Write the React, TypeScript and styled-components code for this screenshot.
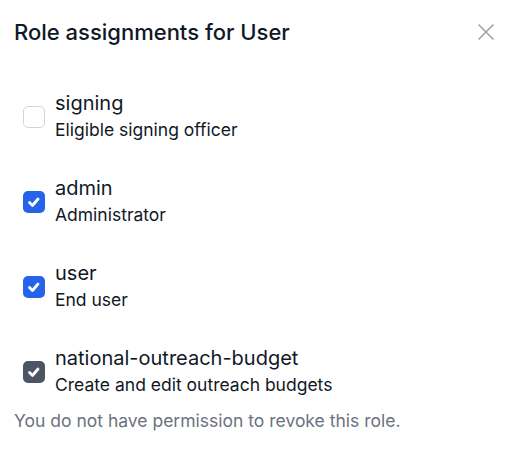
import styled, { createGlobalStyle } from 'styled-components'

const GlobalStyle = createGlobalStyle`
  body {
    margin: 0;
    background: #ffffff;
    font-family: Inter, "Noto Sans", sans-serif;
    color: #111827;
  }
`

const StyledDialog = styled.div`
  width: 512px;
  height: 459px;
  box-sizing: border-box;
  padding: 20px 14px 0 14px;
  display: flex;
  flex-direction: column;
`

const StyledHeader = styled.header`
  display: flex;
  align-items: center;
  justify-content: space-between;
  height: 24px;
`

const StyledTitle = styled.h2`
  margin: 0;
  font-size: 22px;
  font-weight: 500;
  line-height: 24px;
  color: #111827;
`

const StyledClose = styled.button`
  border: none;
  background: none;
  padding: 0;
  width: 20px;
  height: 20px;
  margin-right: 2px;
  display: flex;
  align-items: center;
  justify-content: center;
  color: #9ca3af;
  cursor: pointer;
`

const StyledList = styled.ul`
  list-style: none;
  margin: 0;
  padding: 46px 0 0 9px;
  display: flex;
  flex-direction: column;
  gap: 31px;
`

const StyledItem = styled.li`
  display: flex;
  align-items: center;
  gap: 10px;
`

const StyledBox = styled.span<{ $checked: boolean; $locked?: boolean }>`
  width: 22px;
  height: 22px;
  box-sizing: border-box;
  border-radius: 5px;
  flex-shrink: 0;
  display: flex;
  align-items: center;
  justify-content: center;
  border: ${p => (p.$checked ? 'none' : '1px solid #d1d5db')};
  background: ${p => (!p.$checked ? '#ffffff' : p.$locked ? '#4b5563' : '#2563eb')};
`

const StyledText = styled.div`
  display: flex;
  flex-direction: column;
`

const StyledName = styled.span`
  font-size: 20px;
  line-height: 26px;
  color: #111827;
`

const StyledDescription = styled.span`
  font-size: 17.5px;
  line-height: 28px;
  color: #111827;
`

const StyledNote = styled.p`
  margin: 9px 0 0 0;
  font-size: 17.5px;
  line-height: 26px;
  color: #6b7280;
`

type Role = {
  name: string
  description: string
  checked: boolean
  locked?: boolean
}

const roles: Role[] = [
  { name: 'signing', description: 'Eligible signing officer', checked: false },
  { name: 'admin', description: 'Administrator', checked: true },
  { name: 'user', description: 'End user', checked: true },
  { name: 'national-outreach-budget', description: 'Create and edit outreach budgets', checked: true, locked: true },
]

const Check = () => (
  <svg width="16" height="16" viewBox="0 0 16 16" fill="none">
    <path d="M3.5 8.5l3 3 5.5-6.5" stroke="#ffffff" strokeWidth="2.8" strokeLinecap="round" strokeLinejoin="round" />
  </svg>
)

export default function App() {
  return (
    <>
      <GlobalStyle />
      <StyledDialog>
        <StyledHeader>
          <StyledTitle>Role assignments for User</StyledTitle>
          <StyledClose aria-label="Close">
            <svg width="20" height="20" viewBox="0 0 20 20" fill="none">
              <path d="M3 3l14 14M17 3L3 17" stroke="currentColor" strokeWidth="1.6" strokeLinecap="round" />
            </svg>
          </StyledClose>
        </StyledHeader>
        <StyledList>
          {roles.map(role => (
            <StyledItem key={role.name}>
              <StyledBox $checked={role.checked} $locked={role.locked}>
                {role.checked && <Check />}
              </StyledBox>
              <StyledText>
                <StyledName>{role.name}</StyledName>
                <StyledDescription>{role.description}</StyledDescription>
              </StyledText>
            </StyledItem>
          ))}
        </StyledList>
        <StyledNote>You do not have permission to revoke this role.</StyledNote>
      </StyledDialog>
    </>
  )
}
